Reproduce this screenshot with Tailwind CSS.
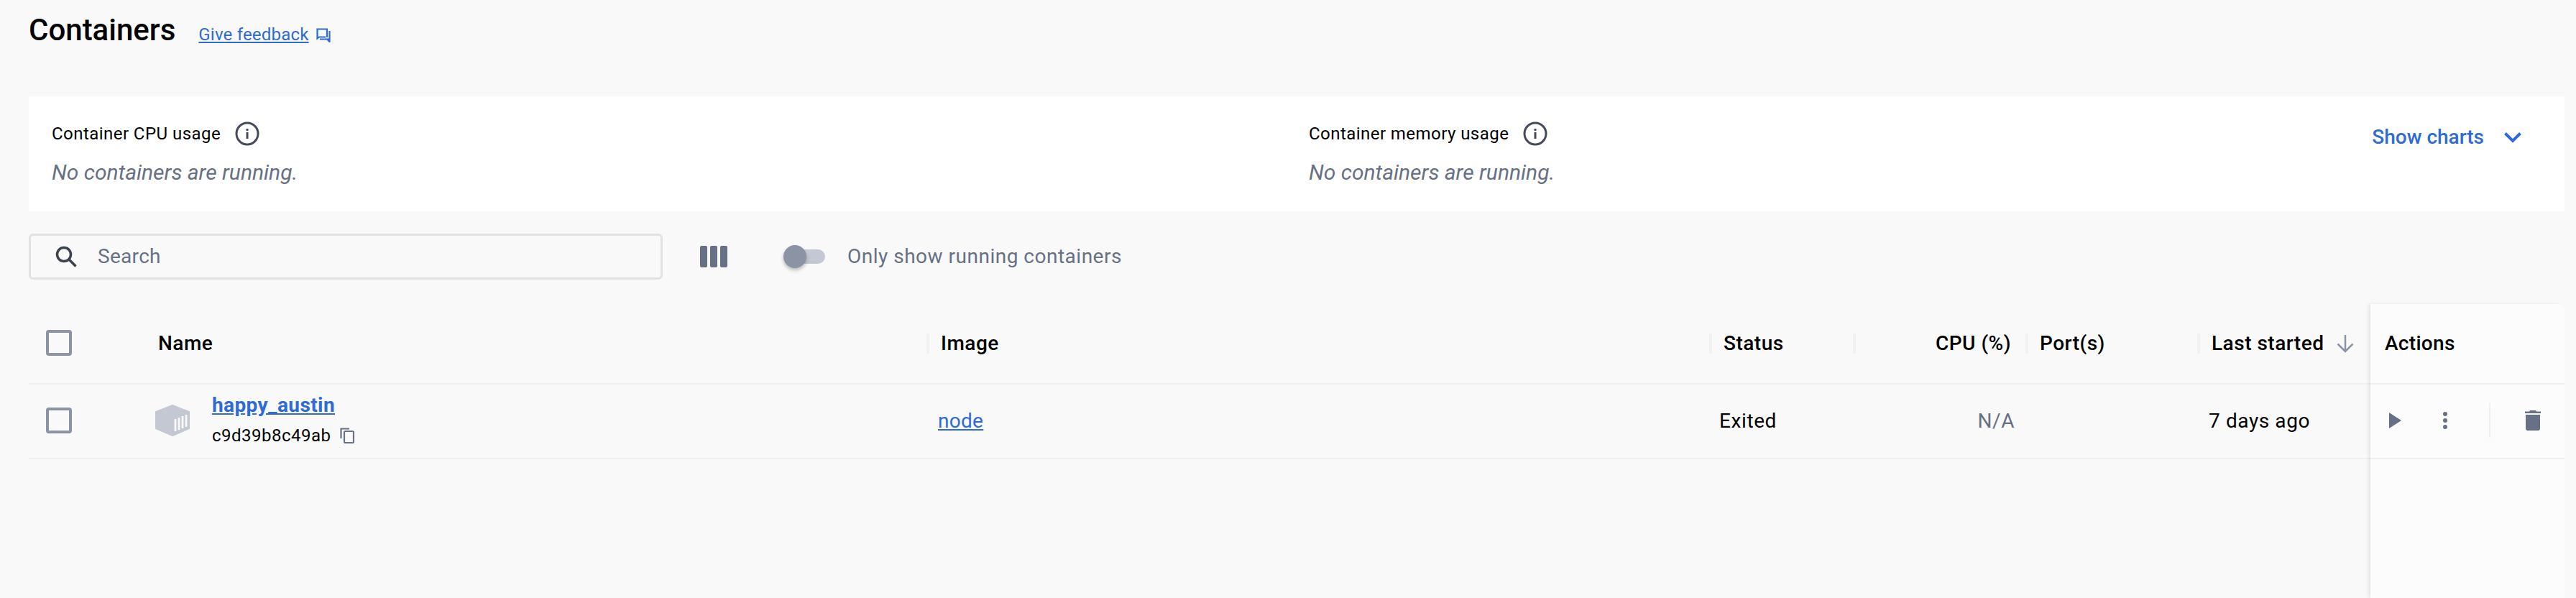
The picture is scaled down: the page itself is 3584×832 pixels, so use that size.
<!DOCTYPE html>
<html lang="en">
<head>
<meta charset="utf-8">
<title>Containers</title>
<script src="https://cdn.jsdelivr.net/npm/@tailwindcss/browser@4"></script>
</head>
<body class="h-[832px] w-[3584px] overflow-hidden bg-[#f9f9fa] font-[Roboto,sans-serif] text-black">
<div class="flex h-full flex-col pl-10 pr-4">
  <header class="flex h-[134px] items-start pt-[20px]">
    <h1 class="text-[42px] leading-[44px] font-medium">Containers</h1>
    <a href="#" class="ml-[32px] mt-[12px] text-[24px] leading-[32px] tracking-[0.2px] text-[#2e6bd2] underline">Give feedback</a>
    <svg class="ml-[10px] mt-[19px] h-[20px] w-[20px] text-[#2e6bd2]" viewBox="0 0 20 20" fill="none" stroke="currentColor" stroke-width="2.2"><path d="M15 13V1.500H1.500V14.500L4 12.500H13"/><path d="M5 15.500H18M18.500 4V19L15.500 16"/></svg>
  </header>

  <section class="flex h-[160px] bg-white">
    <div class="w-[1781px] pl-[32px] pt-[35px]">
      <div class="flex items-center text-[24px] leading-[34px] tracking-[0.45px]">Container CPU usage
        <svg class="ml-[20px] h-[34px] w-[34px] text-[#454b59]" viewBox="0 0 34 34" fill="none"><circle cx="17" cy="17" r="15" stroke="currentColor" stroke-width="3"/><rect x="15.500" y="15" width="3" height="9" fill="currentColor"/><rect x="15.500" y="10" width="3" height="3" fill="currentColor"/></svg>
      </div>
      <p class="mt-[17px] text-[30px] leading-[40px] text-[#677084] italic">No containers are running.</p>
    </div>
    <div class="flex-1 pt-[35px]">
      <div class="flex items-center text-[24px] leading-[34px] tracking-[0.45px]">Container memory usage
        <svg class="ml-[20px] h-[34px] w-[34px] text-[#454b59]" viewBox="0 0 34 34" fill="none"><circle cx="17" cy="17" r="15" stroke="currentColor" stroke-width="3"/><rect x="15.500" y="15" width="3" height="9" fill="currentColor"/><rect x="15.500" y="10" width="3" height="3" fill="currentColor"/></svg>
      </div>
      <p class="mt-[17px] text-[30px] leading-[40px] text-[#677084] italic">No containers are running.</p>
    </div>
    <button class="mr-[60px] flex h-fit items-center gap-[28px] pt-[39px] text-[28px] leading-[36px] font-medium text-[#2e6bd2]">Show charts
      <svg class="h-[16px] w-[24px]" viewBox="0 0 24 16" fill="none" stroke="currentColor" stroke-width="4"><path d="M1.500 2.500 12 13 22.500 2.500"/></svg>
    </button>
  </section>

  <section class="mt-[31px] flex h-[64px] items-center">
    <div class="flex h-[64px] w-[882px] items-center rounded-[6px] border-[3px] border-[#e1e2e6] pl-[34px]">
      <svg class="h-[30px] w-[30px] text-[#3c424e]" viewBox="0 0 30 30" fill="none" stroke="currentColor" stroke-width="3.500"><circle cx="12" cy="12" r="9.500"/><path d="m19 19 9.500 9.500"/></svg>
      <span class="ml-[29px] text-[28px] leading-[36px] tracking-[0.3px] text-[#677084]">Search</span>
    </div>
    <svg class="ml-[52px] h-[30px] w-[38px] text-[#677084]" viewBox="0 0 38 30" fill="currentColor"><rect width="10" height="30" rx="2"/><rect x="14" width="10" height="30" rx="2"/><rect x="28" width="10" height="30" rx="2"/></svg>
    <div class="relative ml-[78px] h-[32px] w-[58px]">
      <div class="absolute left-[6px] top-[6px] h-[20px] w-[52px] rounded-full bg-[#c4c8d2]"></div>
      <div class="absolute left-0 top-0 h-[32px] w-[32px] rounded-full bg-[#8b93a5] shadow-[0_3px_5px_rgba(0,0,0,0.25)]"></div>
    </div>
    <span class="ml-[31px] text-[28px] leading-[36px] tracking-[0.5px] text-[#677084]">Only show running containers</span>
  </section>

  <section class="mt-[34px] flex flex-1">
    <div class="flex-1">
      <div class="grid h-[112px] grid-cols-[160px_1089px_1089px_200px_240px_239px_241px] items-center border-b-2 border-[#f0f0f1] text-[28px] font-medium tracking-[0.5px]">
        <div class="pl-[24px]"><div class="mb-[2px] h-[36px] w-[36px] rounded-[4px] border-[4px] border-[#8b93a5]"></div></div>
        <div class="pl-[20px]">Name</div>
        <div class="flex h-[28px] items-center border-l-4 border-[#f1f1f2] pl-[16px]">Image</div>
        <div class="flex h-[28px] items-center border-l-4 border-[#f1f1f2] pl-[16px]">Status</div>
        <div class="flex h-[28px] items-center justify-end border-l-4 border-[#f1f1f2] pr-[20px]">CPU (%)</div>
        <div class="flex h-[28px] items-center border-l-4 border-[#f1f1f2] pl-[16px]">Port(s)</div>
        <div class="flex h-[28px] items-center border-l-4 border-[#f1f1f2] pl-[16px]">Last started
          <svg class="ml-[18px] h-[26px] w-[24px] text-[#8b93a5]" viewBox="0 0 24 26" fill="none" stroke="currentColor" stroke-width="2.500"><path d="M12 1v23M1.500 13.500 12 24l10.500-10.500"/></svg>
        </div>
      </div>
      <div class="grid h-[104px] grid-cols-[160px_1089px_1089px_200px_240px_239px_241px] items-center border-b-2 border-[#f0f0f1] text-[28px] tracking-[0.6px]">
        <div class="pl-[24px]"><div class="mb-[2px] h-[36px] w-[36px] rounded-[4px] border-[4px] border-[#8b93a5]"></div></div>
        <div class="flex items-center pl-[16px]">
          <svg class="mb-[3px] h-[44px] w-[48px]" viewBox="0 0 48 44" fill="#c4c8d2"><path d="M24 1 47 10V33L24 43 1 33V10Z" stroke="#c4c8d2" stroke-width="2" stroke-linejoin="round"/><path d="M28 37V20M33 35V18M38 33V16M43 31V14" stroke="#f9f9fa" stroke-width="2.800"/></svg>
          <div class="ml-[31px] -mt-[4px]">
            <a href="#" class="block text-[28px] leading-[34px] font-bold tracking-[0.4px] text-[#2e6bd2] underline">happy_austin</a>
            <div class="mt-[9px] flex items-center text-[24px] leading-[32px] tracking-[0.5px]">c9d39b8c49ab
              <svg class="ml-[12px] h-[22px] w-[20px] text-[#677084]" viewBox="0 0 20 22" fill="none" stroke="currentColor" stroke-width="2.200"><path d="M1.500 15V1.500H13"/><rect x="6" y="5" width="13" height="16" rx="1.500"/></svg>
            </div>
          </div>
        </div>
        <div class="pl-[16px]"><a href="#" class="tracking-[0.3px] text-[#2e6bd2] underline">node</a></div>
        <div class="pl-[14px]">Exited</div>
        <div class="pr-[15px] text-right text-[#677084]">N/A</div>
        <div></div>
        <div class="pl-[16px]">7 days ago</div>
      </div>
    </div>
    <div class="w-[270px] rounded-tr-[8px] bg-[#fcfcfc] shadow-[-3px_0_4px_rgba(0,0,0,0.08)]">
      <div class="flex h-[112px] items-center border-b-2 border-[#f0f0f1] pl-[20px] text-[28px] font-medium tracking-[0.3px]">Actions</div>
      <div class="flex h-[104px] items-center border-b-2 border-[#f0f0f1] pb-[2px] pl-[26px] text-[#677084]">
        <svg class="h-[22px] w-[17px]" viewBox="0 0 17 22" fill="currentColor"><path d="M0 0 17 11 0 22Z"/></svg>
        <svg class="ml-[57px] h-[26px] w-[8px]" viewBox="0 0 8 26" fill="currentColor"><circle cx="4" cy="4" r="3"/><circle cx="4" cy="13" r="3"/><circle cx="4" cy="22" r="3"/></svg>
        <div class="ml-[57px] h-[48px] w-[2px] bg-[#f0f0f1]"></div>
        <svg class="ml-[48px] h-[28px] w-[22px]" viewBox="0 0 22 28" fill="currentColor"><path d="M7 0h8l1 1.500h6V4H0V1.500h6ZM1 6h20v19a3 3 0 0 1-3 3H4a3 3 0 0 1-3-3Z"/></svg>
      </div>
    </div>
  </section>
</div>
</body>
</html>
